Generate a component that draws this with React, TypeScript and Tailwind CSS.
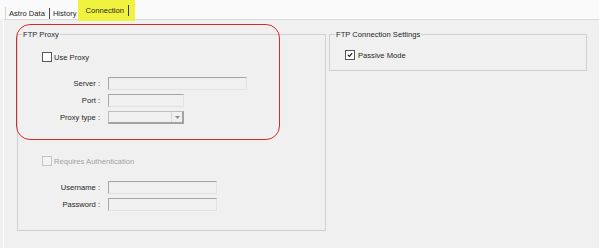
import React from 'react';

function CheckBox({ checked = false, disabled = false }: { checked?: boolean; disabled?: boolean }) {
  return (
    <span
      className={
        disabled
          ? 'w-[10px] h-[10px] border border-[#c4c4c4] bg-[#f3f3f3] flex items-center justify-center shrink-0'
          : 'w-[10px] h-[10px] border border-[#555] bg-white flex items-center justify-center shrink-0'
      }
    >
      {checked && (
        <svg width="6" height="6" viewBox="0 0 6 6">
          <path d="M0.8 2.8 L2.4 4.4 L5.2 1.2" fill="none" stroke="#222" strokeWidth="1.2" />
        </svg>
      )}
    </span>
  );
}

function TextBox({ w }: { w: string }) {
  return (
    <span
      className={`${w} h-[13px] bg-[#f0f0f0] border border-t-[#a6a6a6] border-l-[#a6a6a6] border-b-[#e2e2e2] border-r-[#e2e2e2]`}
    ></span>
  );
}

function Row({ label, children, className }: { label: string; children: React.ReactNode; className: string }) {
  return (
    <div className={`flex items-center h-[13px] gap-[8px] ${className}`}>
      <span className="w-[82px] text-right text-[#262626]">{label}</span>
      {children}
    </div>
  );
}

export default function App() {
  return (
    <div className="relative w-[599px] h-[248px] overflow-hidden bg-[#f0f0f0] font-['Liberation_Sans',Arial,sans-serif] text-[7.6px] leading-[11px] text-[#262626]">
      {/* tab strip */}
      <div className="h-[19px] bg-[#fafafa] flex items-start pl-[5px]">
        <div className="mt-[7px] h-[12px] flex items-center border-l border-[#d4d4d4] pl-[2px]">
          <span className="px-px">Astro Data</span>
          <span className="ml-[3px] w-px h-[11px] bg-[#4a4a4a]"></span>
          <span className="ml-[2px] px-px">History</span>
        </div>
        <div className="relative z-10 h-[21px] bg-[#f1f23d] flex items-center pl-[7px] pr-[6px] pb-[1px]">
          <span className="px-px">Connection</span>
          <span className="ml-[3px] w-px h-[11px] bg-[#3a3a3a]"></span>
        </div>
      </div>

      {/* tab page */}
      <div className="ml-[3px] h-[229px] border-l border-t border-l-[#fbfbfb] border-t-[#dadada] flex items-start gap-[3px] pl-[13px]">
        <fieldset className="mt-[9px] w-[309px] h-[202px] border border-[#d0d0d0] flex flex-col">
          <legend className="ml-[4px] px-[1px] leading-[11px]">FTP Proxy</legend>
          <div className="mt-[11px] h-[12px] pl-[24px] flex items-center gap-[2px]">
            <CheckBox />
            <span>Use Proxy</span>
          </div>
          <Row label="Server :" className="mt-[14px]">
            <TextBox w="w-[139px]" />
          </Row>
          <Row label="Port :" className="mt-[4px]">
            <TextBox w="w-[76px]" />
          </Row>
          <Row label="Proxy type :" className="mt-[4px]">
            <span className="w-[76px] h-[13px] bg-[#f0f0f0] border border-[#bdbdbd] border-r-2 border-b-2 border-r-[#a2a2a2] border-b-[#a2a2a2] flex justify-end">
              <span className="w-[11px] h-full border-l border-[#d6d6d6] flex items-center justify-center">
                <svg width="5" height="3" viewBox="0 0 5 3">
                  <path d="M0 0 H5 L2.5 3 Z" fill="#8a8a8a" />
                </svg>
              </span>
            </span>
          </Row>
          <div className="mt-[31px] h-[12px] pl-[24px] flex items-center gap-[2px] text-[#a3a3a3]">
            <CheckBox disabled />
            <span>Requires Authentication</span>
          </div>
          <Row label="Username :" className="mt-[14px]">
            <TextBox w="w-[109px]" />
          </Row>
          <Row label="Password :" className="mt-[4px]">
            <TextBox w="w-[109px]" />
          </Row>
        </fieldset>

        <fieldset className="mt-[9px] w-[258px] h-[42px] border border-[#d0d0d0] flex flex-col">
          <legend className="ml-[5px] px-[1px] leading-[11px]">FTP Connection Settings</legend>
          <div className="mt-[9px] h-[12px] pl-[15px] flex items-center gap-[3px]">
            <CheckBox checked />
            <span>Passive Mode</span>
          </div>
        </fieldset>
      </div>

      {/* red annotation */}
      <div className="absolute left-[16px] top-[24px] w-[264px] h-[116px] border-[1.5px] border-[#d42a2a] rounded-[14px]"></div>
    </div>
  );
}
